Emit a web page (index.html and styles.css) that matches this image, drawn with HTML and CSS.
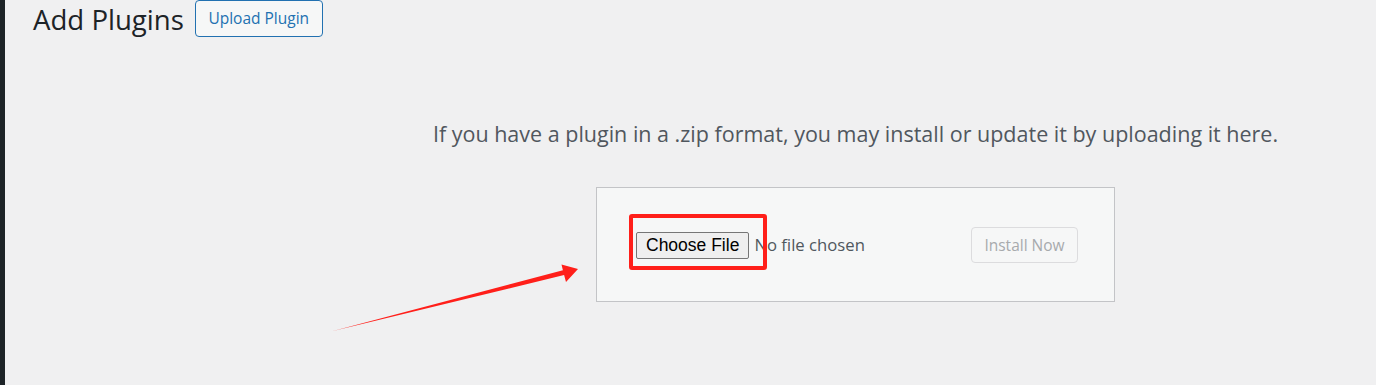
FILE: index.html
```html
<!DOCTYPE html>
<html lang="en">
<head>
    <meta charset="UTF-8">
    <title>Add Plugins</title>
    <link rel="stylesheet" href="styles.css">
</head>
<body>
    <div class="admin">
        <!-- admin menu edge -->
        <div class="admin-menu"></div>

        <div class="content">
            <div class="page-head">
                <h1 class="page-title">Add Plugins</h1>
                <a href="#" class="page-action">Upload Plugin</a>
            </div>

            <div class="upload-plugin">
                <p class="install-help">If you have a plugin in a .zip format, you may install or update it by uploading it here.</p>
                <form class="upload-form">
                    <input type="file" class="file-input" name="pluginzip">
                    <button type="submit" class="btn-install" disabled>Install Now</button>
                    <span class="mark"></span>
                </form>
            </div>
        </div>
    </div>

    <!-- annotation arrow -->
    <svg class="arrow" width="1376" height="385" viewBox="0 0 1376 385">
        <polygon points="333,331 562.9,270.3 561.5,264.6 578,269 566,282 564.1,275.1" fill="#ff1f1a"/>
    </svg>
</body>
</html>
```

FILE: styles.css
```css
:root {
    --bg: #f0f0f1;
    --dark: #1d2327;
    --text: #50575e;
    --blue: #2271b1;
    --box: #f6f7f7;
    --line: #c3c4c7;
    --red: #ff1f1a;
}

body {
    margin: 0;
    background: var(--bg);
    color: var(--dark);
    font-family: "Open Sans", sans-serif;
}

.admin {
    display: flex;
    min-height: 385px;
}

.admin-menu {
    width: 5px;
    background: var(--dark);
}

.content {
    flex: 1;
    padding-left: 28px;
}

/* header */
.page-head {
    display: flex;
    align-items: flex-start;
    gap: 11px;
}

.page-title {
    margin: 0;
    padding-top: 1px;
    font-size: 27.6px;
    font-weight: 400;
    line-height: 36px;
}

.page-action {
    box-sizing: border-box;
    height: 37px;
    padding: 0 12.5px;
    border: 1px solid var(--blue);
    border-radius: 4px;
    background: var(--box);
    color: var(--blue);
    font-size: 15.5px;
    line-height: 35px;
    text-decoration: none;
}

/* upload area */
.upload-plugin {
    padding-left: 302px;
    text-align: center;
}

.install-help {
    margin: 82px 0 0;
    color: var(--text);
    font-size: 21.5px;
    line-height: 30px;
}

.upload-form {
    position: relative;
    box-sizing: border-box;
    width: 519px;
    height: 115px;
    margin: 38px auto 0;
    padding: 0 36px 0 39px;
    display: flex;
    align-items: center;
    justify-content: space-between;
    border: 1px solid var(--line);
    background: var(--box);
}

.file-input {
    margin-top: 1px;
    font-family: "Open Sans", sans-serif;
    font-size: 16.7px;
    color: var(--text);
}

.file-input::file-selector-button {
    box-sizing: border-box;
    height: 27px;
    margin-right: 5px;
    padding: 0 9px;
    border: 1px solid #767676;
    border-radius: 2px;
    background: #efefef;
    color: #000;
    font-family: "Liberation Sans", Arial, sans-serif;
    font-size: 17.5px;
}

.btn-install {
    box-sizing: border-box;
    width: 107px;
    height: 36px;
    border: 1px solid #dcdcde;
    border-radius: 4px;
    background: var(--box);
    color: #a7aaad;
    font-family: "Open Sans", sans-serif;
    font-size: 15.5px;
}

/* annotations */
.mark {
    position: absolute;
    left: 32px;
    top: 26px;
    width: 138px;
    height: 56px;
    box-sizing: border-box;
    border: 4px solid var(--red);
    border-radius: 3px;
}

.arrow {
    position: absolute;
    top: 0;
    left: 0;
    pointer-events: none;
}
```
